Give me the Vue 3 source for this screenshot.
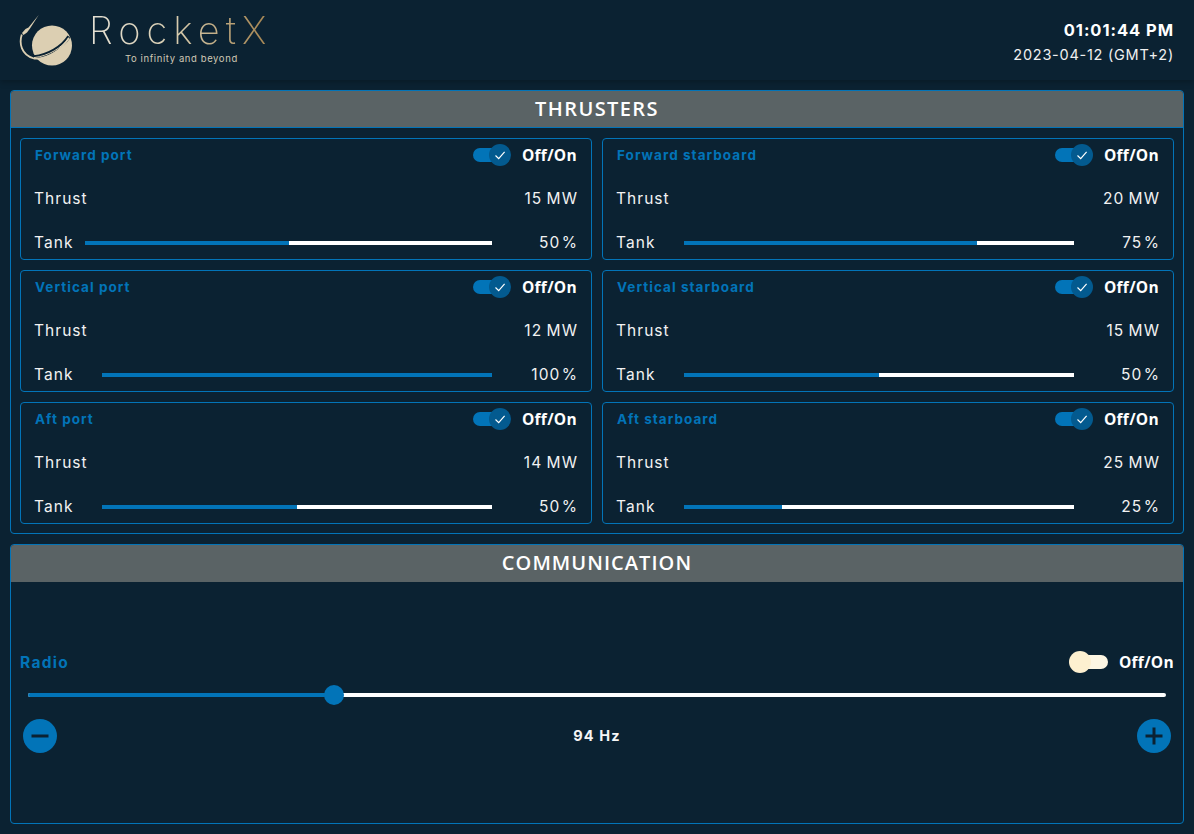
<script setup>
const thrusters = [
  { name: 'Forward port', thrust: 15, tank: 50, compact: true },
  { name: 'Forward starboard', thrust: 20, tank: 75 },
  { name: 'Vertical port', thrust: 12, tank: 100 },
  { name: 'Vertical starboard', thrust: 15, tank: 50 },
  { name: 'Aft port', thrust: 14, tank: 50 },
  { name: 'Aft starboard', thrust: 25, tank: 25 }
]
const frequency = 26.9
</script>

<template>
  <div class="page">
    <header class="topbar">
      <div class="brand">
        <svg class="logo-mark" viewBox="0 -2 60 60" width="60" height="60" aria-hidden="true">
          <circle cx="33" cy="30.5" r="20" fill="#dccfb2" />
          <path d="M50 21.5C43 32.5 29 40.5 15 42" fill="none" stroke="#0b2232" stroke-width="3.6" />
          <path d="M50 22.5C43 33 29 41.2 15 42.6" fill="none" stroke="#dccfb2" stroke-width="1" />
          <path d="M2.8 19.5C0 28 2 40 15 43.5C29 45 42 35 50 23" fill="none" stroke="#dccfb2" stroke-width="1.8" />
          <path d="M19.7 0L9.5 12.5L6.5 14L3 18L4.5 20L8 17.5L11 13.5Z" fill="#dccfb2" />
        </svg>
        <div class="wordmark">
          <div class="logo-name">RocketX</div>
          <div class="tagline">To infinity and beyond</div>
        </div>
      </div>
      <div class="clock">
        <div class="time">01:01:44 PM</div>
        <div class="date">2023-04-12 (GMT+2)</div>
      </div>
    </header>

    <main class="content">
      <section class="panel thrusters">
        <h2 class="panel-title">THRUSTERS</h2>
        <div class="grid">
          <article v-for="t in thrusters" :key="t.name" class="card">
            <div class="row head-row">
              <span class="card-name">{{ t.name }}</span>
              <span class="toggle on">
                <span class="track"></span>
                <span class="knob">
                  <svg viewBox="0 0 14 14" width="14" height="14"><path d="M2.5 7.5L5.7 10.6L11.6 3.8" fill="none" stroke="#fff" stroke-width="1.2" /></svg>
                </span>
              </span>
              <span class="switch-label">Off/On</span>
            </div>
            <div class="row">
              <span class="label">Thrust</span>
              <span class="value">{{ t.thrust }} MW</span>
            </div>
            <div class="row">
              <span class="label tank-label" :class="{ compact: t.compact }">Tank</span>
              <span class="bar"><span class="bar-fill" :style="{ width: t.tank + '%' }"></span></span>
              <span class="value tank-value">{{ t.tank }} %</span>
            </div>
          </article>
        </div>
      </section>

      <section class="panel comms">
        <h2 class="panel-title">COMMUNICATION</h2>
        <div class="radio">
          <div class="radio-head">
            <span class="radio-name">Radio</span>
            <span class="toggle off">
              <span class="track"></span>
              <span class="knob"></span>
            </span>
            <span class="switch-label">Off/On</span>
          </div>
          <div class="slider">
            <span class="slider-fill" :style="{ width: frequency + '%' }"></span>
            <span class="slider-thumb" :style="{ left: frequency + '%' }"></span>
          </div>
          <div class="tuner">
            <span class="round-btn">
              <svg viewBox="0 0 34 34" width="34" height="34"><path d="M8.5 17H25.5" stroke="#0b2232" stroke-width="3" /></svg>
            </span>
            <span class="freq">94 Hz</span>
            <span class="round-btn">
              <svg viewBox="0 0 34 34" width="34" height="34"><path d="M8.5 17H25.5M17 8.5V25.5" stroke="#0b2232" stroke-width="3" /></svg>
            </span>
          </div>
        </div>
      </section>
    </main>
  </div>
</template>

<style>
html, body { background: #0b2232; }
</style>

<style scoped>
.page {
  width: 1194px;
  height: 834px;
  background: #0b2232;
  color: #fff;
  font-family: "Inter", "Liberation Sans", sans-serif;
  overflow: hidden;
}
.topbar {
  height: 80px;
  box-sizing: border-box;
  display: flex;
  justify-content: space-between;
  align-items: center;
  padding: 0 20px 0 19px;
  background: #0b2232;
  box-shadow: 0 2px 6px rgba(0, 0, 0, 0.25);
  position: relative;
}
.brand { display: flex; align-items: flex-start; height: 80px; }
.logo-mark { margin: 13px 0 0 0; flex: none; }
.wordmark { margin: 6px 0 0 10px; width: 190px; }
.logo-name {
  font-family: "Inter", sans-serif;
  font-weight: 200;
  font-size: 38px;
  line-height: 48px;
  letter-spacing: 6px;
  background: linear-gradient(90deg, #e4e0d4 0%, #d8cdb0 45%, #a98a58 90%);
  -webkit-background-clip: text;
  background-clip: text;
  color: transparent;
}
.tagline {
  font-size: 9.5px;
  line-height: 12px;
  color: #cfc8b5;
  margin: -1px 0 0 36px;
  letter-spacing: 0.6px;
  white-space: nowrap;
}
.clock { text-align: right; padding-top: 4px; }
.time { font-size: 16.5px; font-weight: 700; line-height: 20px; letter-spacing: 0.95px; margin-top: 1px; }
.date { font-size: 14.5px; line-height: 20px; margin-top: 5px; letter-spacing: 0.75px; color: #f0f0f0; }

.content {
  display: flex;
  flex-direction: column;
  gap: 10px;
  padding: 10px;
}
.panel {
  box-sizing: border-box;
  border: 1px solid #0274b8;
  border-radius: 4px;
  overflow: hidden;
}
.thrusters { height: 444px; }
.comms { height: 280px; display: flex; flex-direction: column; }
.panel-title {
  margin: 0;
  height: 36px;
  background: #5a6365;
  border-bottom: 1px solid #0274b8;
  color: #fff;
  font-family: "Open Sans", sans-serif;
  font-size: 20px;
  font-weight: 600;
  line-height: 36px;
  letter-spacing: 1.4px;
  text-align: center;
}
.comms .panel-title { height: 37px; line-height: 35px; letter-spacing: 1.05px; border-bottom: none; }
.grid {
  display: grid;
  grid-template-columns: 1fr 1fr;
  grid-auto-rows: 122px;
  gap: 10px;
  padding: 10px 9px 0;
}
.card {
  box-sizing: border-box;
  border: 1px solid #0274b8;
  border-radius: 4px;
  padding: 5px 14px 0;
  display: flex;
  flex-direction: column;
  gap: 20px;
}
.row {
  display: flex;
  align-items: center;
  height: 24px;
}
.head-row { height: 22px; }
.card-name {
  flex: 1;
  color: #0274b8;
  font-size: 13.5px;
  font-weight: 700;
  letter-spacing: 1.05px;
}
.label, .value {
  font-size: 15.5px;
  letter-spacing: 1.05px;
  color: #f2f2f2;
}
.label { margin-left: -1px; }
.value { margin-left: auto; margin-right: -1px; word-spacing: -1px; }
.tank-label { width: 68px; flex: none; }
.tank-label.compact { width: 51px; }
.tank-value { width: 86px; flex: none; text-align: right; word-spacing: -4px; }
.bar {
  flex: 1;
  height: 4px;
  margin-top: 2px;
  background: #fff;
  display: block;
}
.bar-fill { display: block; height: 100%; background: #0274b8; }
.toggle {
  position: relative;
  display: block;
  flex: none;
}
.toggle.on { width: 38px; height: 22px; margin-right: 11px; }
.toggle.on .track {
  position: absolute;
  left: 0;
  top: 4px;
  width: 36px;
  height: 14px;
  border-radius: 7px;
  background: #0274b8;
}
.toggle.on .knob {
  position: absolute;
  right: 0;
  top: 0;
  width: 22px;
  height: 22px;
  border-radius: 50%;
  background: #035a8f;
  display: flex;
  align-items: center;
  justify-content: center;
}
.toggle.off { width: 39px; height: 22px; margin-right: 11px; }
.toggle.off .track {
  position: absolute;
  right: 0;
  top: 4px;
  width: 36px;
  height: 14px;
  border-radius: 7px;
  background: #fdf6e3;
}
.toggle.off .knob {
  position: absolute;
  left: 0;
  top: 0;
  width: 22px;
  height: 22px;
  border-radius: 50%;
  background: #fdf0d0;
}
.switch-label {
  font-family: "Open Sans", sans-serif;
  font-size: 15.5px;
  font-weight: 700;
  letter-spacing: 0.3px;
  line-height: 20px;
  margin-top: -1px;
  color: #fff;
}
.radio {
  flex: 1;
  display: flex;
  flex-direction: column;
  padding: 68px 9px 0;
}
.radio-head { display: flex; align-items: center; height: 24px; }
.radio-name {
  flex: 1;
  color: #0274b8;
  font-size: 15.5px;
  font-weight: 700;
  letter-spacing: 1.3px;
}
.slider {
  position: relative;
  height: 4px;
  margin: 19px 8px 0;
  background: #fff;
  border-radius: 2px;
}
.slider-fill {
  position: absolute;
  left: 0;
  top: 0;
  height: 100%;
  border-radius: 2px;
  background: #0274b8;
}
.slider-thumb {
  position: absolute;
  top: -8px;
  width: 20px;
  height: 20px;
  margin-left: -10px;
  border-radius: 50%;
  background: #0274b8;
}
.tuner {
  display: flex;
  justify-content: space-between;
  align-items: center;
  margin: 22px 3px 0;
}
.round-btn {
  width: 34px;
  height: 34px;
  border-radius: 50%;
  background: #0274b8;
  display: block;
}
.round-btn svg { display: block; }
.freq {
  font-size: 14.5px;
  font-weight: 700;
  letter-spacing: 1.1px;
  margin-bottom: 2px;
  color: #f5f5f5;
}
</style>
